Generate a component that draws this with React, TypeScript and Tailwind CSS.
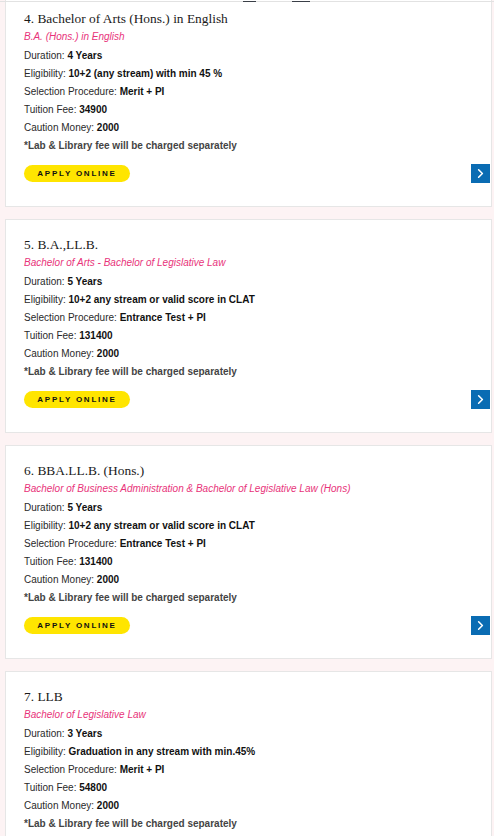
import { ChevronRight } from "lucide-react";

type Course = {
  title: string;
  subtitle: string;
  duration: string;
  eligibility: string;
  selection: string;
  fee: string;
  caution: string;
};

const courses: Course[] = [
  {
    title: "4. Bachelor of Arts (Hons.) in English",
    subtitle: "B.A. (Hons.) in English",
    duration: "4 Years",
    eligibility: "10+2 (any stream) with min 45 %",
    selection: "Merit + PI",
    fee: "34900",
    caution: "2000",
  },
  {
    title: "5. B.A.,LL.B.",
    subtitle: "Bachelor of Arts - Bachelor of Legislative Law",
    duration: "5 Years",
    eligibility: "10+2 any stream or valid score in CLAT",
    selection: "Entrance Test + PI",
    fee: "131400",
    caution: "2000",
  },
  {
    title: "6. BBA.LL.B. (Hons.)",
    subtitle:
      "Bachelor of Business Administration & Bachelor of Legislative Law (Hons)",
    duration: "5 Years",
    eligibility: "10+2 any stream or valid score in CLAT",
    selection: "Entrance Test + PI",
    fee: "131400",
    caution: "2000",
  },
  {
    title: "7. LLB",
    subtitle: "Bachelor of Legislative Law",
    duration: "3 Years",
    eligibility: "Graduation in any stream with min.45%",
    selection: "Merit + PI",
    fee: "54800",
    caution: "2000",
  },
];

function Row({ label, value }: { label: string; value: string }) {
  return (
    <p className="h-[18px] leading-[18px] text-[#2a2a2a]">
      {label}: <span className="font-bold text-[#111]">{value}</span>
    </p>
  );
}

function CourseCard({ course }: { course: Course }) {
  return (
    <div className="h-[214px] shrink-0 border border-[#e6e6e6] bg-white px-[18px] pt-[16px]">
      <h3 className="font-['Liberation_Serif',serif] text-[13.4px] leading-[18px] text-[#1a1a1a]">
        {course.title}
      </h3>
      <p className="text-[10px] italic leading-[18px] text-[#e8337a]">
        {course.subtitle}
      </p>
      <div className="mt-[1px] text-[10px]">
        <Row label="Duration" value={course.duration} />
        <Row label="Eligibility" value={course.eligibility} />
        <Row label="Selection Procedure" value={course.selection} />
        <Row label="Tuition Fee" value={course.fee} />
        <Row label="Caution Money" value={course.caution} />
        <p className="h-[18px] font-bold leading-[18px] text-[#444]">
          *Lab &amp; Library fee will be charged separately
        </p>
      </div>
      <div className="mt-[9px] flex items-center justify-between">
        <button className="flex h-[17px] w-[106px] items-center justify-center rounded-full bg-[#ffe500] text-[8px] font-bold tracking-[0.22em] text-[#111]">
          APPLY ONLINE
        </button>
        <span className="-mr-[17px] flex h-[19px] w-[19px] items-center justify-center bg-[#0a6cb3] text-white">
          <ChevronRight size={15} strokeWidth={2.5} />
        </span>
      </div>
    </div>
  );
}

export default function App() {
  return (
    <div className="relative h-[836px] w-[494px] overflow-hidden bg-[#fdf3f4] font-['Liberation_Sans',Arial,sans-serif]">
      <div className="absolute left-0 top-[1px] h-[1px] w-full bg-[#e2e2e2]" />
      <div className="absolute left-[243px] top-[1px] h-[1px] w-[13px] bg-[#3a3f47]" />
      <div className="absolute left-[292px] top-[1px] h-[1px] w-[18px] bg-[#3a3f47]" />
      <div className="-mt-[7px] flex flex-col gap-[12px] pl-[5px] pr-[2px]">
        {courses.map((c) => (
          <CourseCard key={c.title} course={c} />
        ))}
      </div>
    </div>
  );
}
